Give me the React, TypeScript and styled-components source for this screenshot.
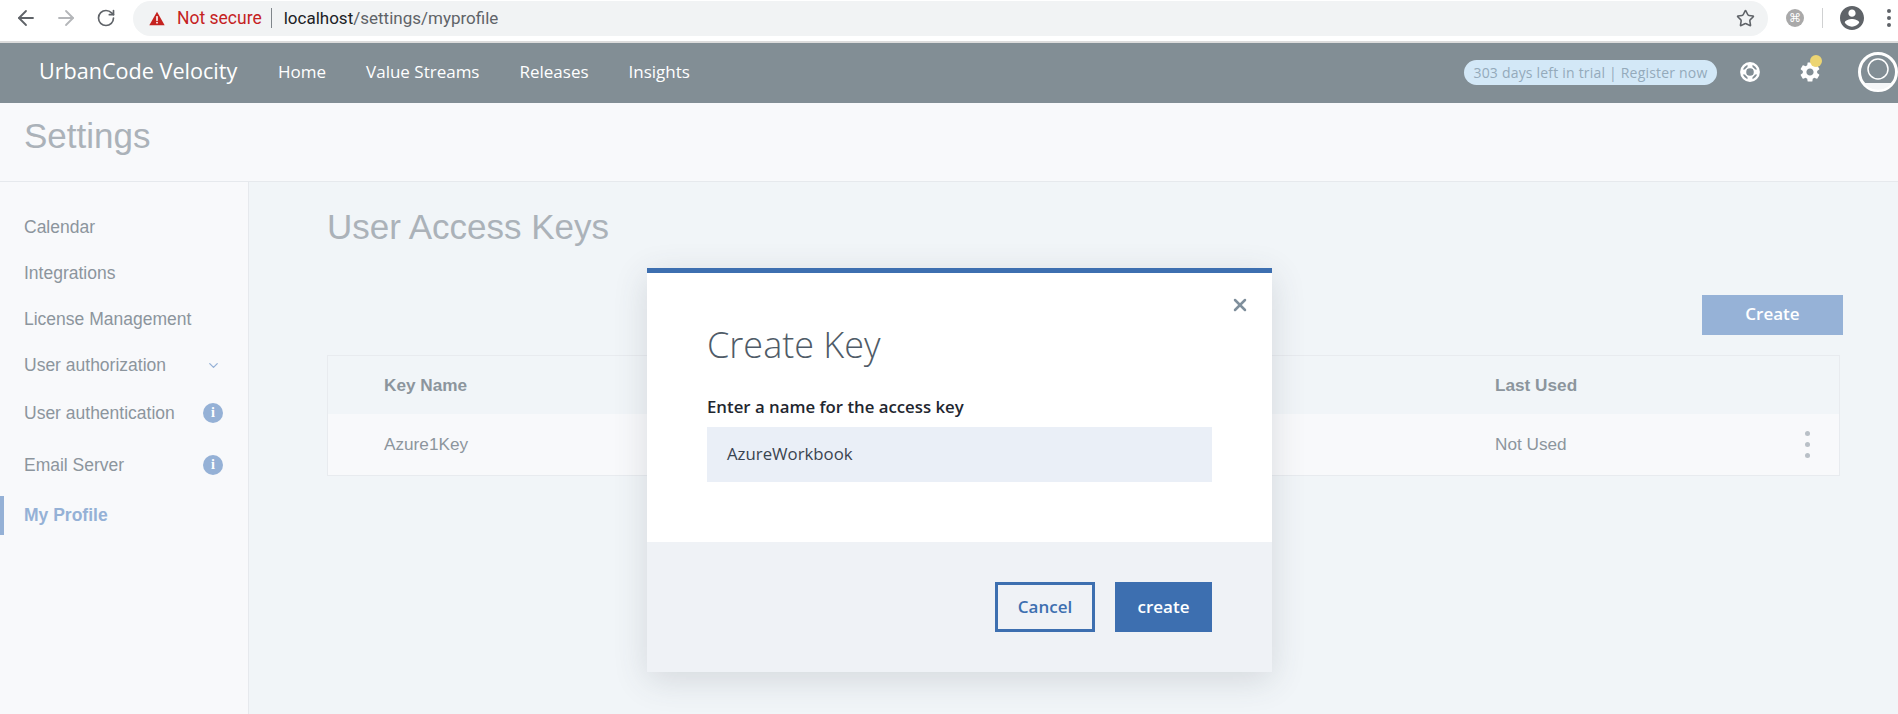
import React from 'react';
import styled, { createGlobalStyle } from 'styled-components';
import { ArrowLeft, ArrowRight, RotateCw, Star, ChevronDown, X } from 'lucide-react';

const GlobalStyle = createGlobalStyle`
  html, body {
    margin: 0;
    height: 100%;
    overflow: hidden;
    background: #f1f5f8;
    font-family: "Liberation Sans", Arial, sans-serif;
  }
  * {
    box-sizing: border-box;
  }
`;

const Page = styled.div`
  position: relative;
  display: flex;
  flex-direction: column;
  width: 1898px;
  height: 714px;
  overflow: hidden;
`;

/* browser chrome */
const BrowserBar = styled.div`
  display: flex;
  align-items: center;
  flex: none;
  height: 43px;
  padding: 1px 0 6px 14px;
  background: #fff;
  border-bottom: 2px solid #dcdcdc;
`;

const ChromeButton = styled.span<{ $faded?: boolean }>`
  display: flex;
  justify-content: center;
  width: 24px;
  margin-right: 16px;
  color: ${(p) => (p.$faded ? '#b4b6b9' : '#5f6368')};
`;

const UrlPill = styled.div`
  display: flex;
  align-items: center;
  width: 1635px;
  height: 35px;
  margin-left: -1px;
  padding: 0 13px 0 16px;
  border-radius: 18px;
  background: #f1f3f4;
  font-family: Roboto, sans-serif;
  font-size: 17px;
`;

const NotSecure = styled.span`
  margin-left: 12px;
  color: #c5221f;
  font-size: 17.500px;
`;

const UrlDivider = styled.span`
  width: 1px;
  height: 20px;
  margin: 0 12px 0 9px;
  background: #80868b;
`;

const UrlHost = styled.span`
  color: #202124;
`;

const UrlPath = styled.span`
  flex: 1;
  color: #5f6368;
`;

const ChromeTools = styled.div`
  display: flex;
  align-items: center;
  margin-left: 18px;
`;

const ExtensionBadge = styled.span`
  display: flex;
  align-items: center;
  justify-content: center;
  width: 18px;
  height: 18px;
  border-radius: 50%;
  background: #a9a9a9;
  color: #fff;
  font-family: "DejaVu Sans", sans-serif;
  font-size: 12px;
`;

const ToolDivider = styled.span`
  width: 1px;
  height: 20px;
  margin: 0 17px 0 18px;
  background: #d0d1d2;
`;

const ChromeDots = styled.span`
  display: flex;
  flex-direction: column;
  gap: 3px;
  margin-left: 23px;

  i {
    width: 4px;
    height: 4px;
    border-radius: 50%;
    background: #5f6368;
  }
`;

/* app header */
const NavBar = styled.header`
  display: flex;
  align-items: center;
  flex: none;
  height: 60px;
  padding: 0 0 2px 39px;
  background: #828e95;
  color: #fff;
  font-family: "Open Sans", sans-serif;
`;

const Brand = styled.div`
  width: 239px;
  padding-bottom: 3px;
  font-size: 21.600px;
`;

const NavLink = styled.a`
  margin-right: 40px;
  padding-bottom: 2px;
  font-size: 17px;
`;

const NavRight = styled.div`
  display: flex;
  align-items: center;
  margin-left: auto;
`;

const TrialPill = styled.div`
  display: flex;
  align-items: center;
  justify-content: center;
  width: 253px;
  height: 25px;
  margin-right: 21px;
  border-radius: 13px;
  background: #d3e8f7;
  color: #94aabb;
  font-family: "Open Sans", sans-serif;
  font-size: 14px;
  letter-spacing: 0.2px;
`;

const NavIcon = styled.span`
  position: relative;
  display: flex;
  justify-content: center;
  width: 24px;
  margin-right: 36px;
`;

const Badge = styled.span`
  position: absolute;
  top: -5px;
  left: 12px;
  width: 12px;
  height: 12px;
  border-radius: 50%;
  background: #ecd573;
`;

const Avatar = styled.span`
  display: flex;
  flex: none;
  width: 40px;
  height: 40px;
`;

/* settings */
const PageHeader = styled.div`
  display: flex;
  align-items: center;
  flex: none;
  height: 79px;
  padding: 0 0 12px 24px;
  background: #f8f9fb;
  border-bottom: 1px solid #e6e9ed;
  color: #abb2b9;
  font-size: 35px;
`;

const Body = styled.div`
  display: flex;
  flex: 1;
`;

const Sidebar = styled.nav`
  flex: none;
  width: 249px;
  padding-top: 22px;
  background: #f8f9fb;
  border-right: 1px solid #e6e9ed;
`;

const SideItem = styled.div<{ $height?: number; $active?: boolean }>`
  display: flex;
  align-items: center;
  justify-content: space-between;
  height: ${(p) => p.$height ?? 46}px;
  margin-top: ${(p) => (p.$active ? 4 : 0)}px;
  padding: 0 25px 0 ${(p) => (p.$active ? 20 : 24)}px;
  border-left: ${(p) => (p.$active ? '4px solid #95b1d6' : 'none')};
  color: ${(p) => (p.$active ? '#95b1d6' : '#8c959d')};
  font-size: 17.500px;
  font-weight: ${(p) => (p.$active ? 700 : 400)};
`;

const ChevronSlot = styled.span`
  display: flex;
  justify-content: center;
  width: 20px;
  color: #95b1d6;
`;

const InfoDot = styled.span`
  display: flex;
  align-items: center;
  justify-content: center;
  width: 20px;
  height: 20px;
  border-radius: 50%;
  background: #95b1d6;
  color: #fff;
  font-family: "Liberation Serif", serif;
  font-size: 14px;
  font-weight: 700;
`;

const Main = styled.main`
  flex: 1;
  padding: 25px 58px 0 78px;
`;

const MainTitle = styled.h2`
  margin: 0;
  color: #abb2b9;
  font-size: 35px;
  font-weight: 400;
  line-height: 40px;
`;

const Actions = styled.div`
  display: flex;
  justify-content: flex-end;
  margin: 48px -3px 20px 0;
`;

const PrimaryFaded = styled.button`
  width: 141px;
  height: 40px;
  padding-bottom: 4px;
  border: 0;
  background: #96b2d7;
  color: #fff;
  font-family: "Open Sans", sans-serif;
  font-size: 17px;
  font-weight: 600;
`;

const Table = styled.div`
  border: 1px solid #e8ebef;
  color: #8c959d;
  font-size: 17.200px;
`;

const Row = styled.div<{ $header?: boolean }>`
  display: grid;
  grid-template-columns: 1111px 1fr 34px;
  align-items: center;
  height: ${(p) => (p.$header ? 58 : 61)}px;
  padding: 0 0 0 56px;
  background: ${(p) => (p.$header ? 'transparent' : '#f8f9fb')};
  font-weight: ${(p) => (p.$header ? 700 : 400)};
`;

const MoreDots = styled.span`
  display: flex;
  flex-direction: column;
  gap: 6px;

  i {
    width: 5px;
    height: 5px;
    border-radius: 50%;
    background: #b9c0c7;
  }
`;

/* create key dialog */
const Modal = styled.section`
  position: absolute;
  top: 268px;
  left: 647px;
  display: flex;
  flex-direction: column;
  width: 625px;
  height: 404px;
  border-top: 5px solid #3d6fb0;
  background: #fff;
  box-shadow: 0 8px 32px rgba(60, 70, 80, 0.16);
`;

const CloseButton = styled.span`
  position: absolute;
  top: 22px;
  right: 22px;
  display: flex;
  color: #7f8f9c;
`;

const ModalBody = styled.div`
  flex: 1;
  padding: 50px 60px 0;
`;

const ModalTitle = styled.h3`
  margin: 0 0 29px;
  color: #4f5b67;
  font-family: "Open Sans", sans-serif;
  font-size: 36px;
  font-weight: 300;
  line-height: 44px;
`;

const FieldLabel = styled.label`
  display: block;
  margin-bottom: 9px;
  color: #1f2730;
  font-family: "Open Sans", sans-serif;
  font-size: 16.800px;
  font-weight: 600;
  line-height: 22px;
`;

const NameInput = styled.div`
  display: flex;
  align-items: center;
  height: 55px;
  padding: 0 20px 2px;
  background: #eaeff7;
  color: #3a4450;
  font-family: "Open Sans", sans-serif;
  font-size: 16.800px;
`;

const ModalFooter = styled.div`
  display: flex;
  justify-content: flex-end;
  gap: 20px;
  flex: none;
  height: 130px;
  padding: 40px 60px 0;
  background: #eff2f6;
`;

const Button = styled.button<{ $outline?: boolean }>`
  width: ${(p) => (p.$outline ? 100 : 97)}px;
  height: 50px;
  padding-bottom: 2px;
  border: ${(p) => (p.$outline ? '3px solid #3d6fb0' : '0')};
  background: ${(p) => (p.$outline ? 'transparent' : '#3d6fb0')};
  color: ${(p) => (p.$outline ? '#3d6fb0' : '#fff')};
  font-family: "Open Sans", sans-serif;
  font-size: 17px;
  font-weight: 600;
`;

function WarningIcon (): React.ReactElement {
  return (
    <svg width='16' height='15' viewBox='0 0 20 18'>
      <path d='M10 0.5L19.600 17.500H0.400z' fill='#c5221f' />
      <rect x='9' y='6' width='2' height='6' fill='#fff' />
      <rect x='9' y='13.200' width='2' height='2' fill='#fff' />
    </svg>
  );
}

function ProfileIcon (): React.ReactElement {
  return (
    <svg width='24' height='24' viewBox='2 2 20 20'>
      <path fill='#5f6368' d='M12 2C6.480 2 2 6.480 2 12s4.480 10 10 10 10-4.480 10-10S17.520 2 12 2zm0 3c1.660 0 3 1.340 3 3s-1.340 3-3 3-3-1.340-3-3 1.340-3 3-3zm0 14.200c-2.500 0-4.710-1.280-6-3.220.030-1.990 4-3.080 6-3.080 1.990 0 5.970 1.090 6 3.080-1.290 1.940-3.500 3.220-6 3.220z' />
    </svg>
  );
}

function LifeRingIcon (): React.ReactElement {
  return (
    <svg width='20' height='20' viewBox='0 0 20 20'>
      <circle cx='10' cy='10' r='8.700' fill='none' stroke='#fff' strokeWidth='2.400' />
      <circle cx='10' cy='10' r='4.700' fill='none' stroke='#fff' strokeWidth='1.800' />
      <path d='M10 2v5M10 13v5M2 10h5M13 10h5' stroke='#fff' strokeWidth='5' />
      <circle cx='10' cy='10' r='3.800' fill='#828e95' />
    </svg>
  );
}

function GearIcon (): React.ReactElement {
  return (
    <svg width='24' height='24' viewBox='0 0 24 24'>
      <path fill='#fff' d='M19.140 12.940c.040-.300.060-.610.060-.940 0-.320-.020-.640-.070-.940l2.030-1.580c.180-.140.230-.410.120-.610l-1.920-3.320c-.120-.220-.370-.290-.590-.220l-2.390.960c-.500-.380-1.030-.700-1.620-.940l-.360-2.540c-.040-.240-.240-.410-.480-.410h-3.840c-.240 0-.430.170-.470.410l-.360 2.540c-.590.240-1.130.570-1.620.940l-2.390-.960c-.220-.080-.470 0-.590.220L2.740 8.870c-.120.210-.080.470.120.610l2.030 1.580c-.050.300-.090.630-.090.940s.020.640.070.940l-2.030 1.580c-.180.140-.230.410-.12.610l1.920 3.320c.120.220.370.290.590.220l2.390-.960c.500.380 1.030.700 1.620.940l.360 2.540c.050.240.240.410.480.410h3.840c.240 0 .440-.17.470-.41l.360-2.540c.590-.240 1.130-.560 1.620-.94l2.390.96c.220.080.470 0 .590-.22l1.920-3.320c.120-.22.070-.47-.12-.61l-2.010-1.580zM12 15.600c-1.980 0-3.600-1.620-3.600-3.600s1.620-3.600 3.600-3.600 3.600 1.620 3.600 3.600-1.620 3.600-3.600 3.600z' />
    </svg>
  );
}

function AvatarIcon (): React.ReactElement {
  return (
    <svg width='40' height='40' viewBox='0 0 40 40'>
      <circle cx='20' cy='20' r='18.500' fill='none' stroke='#fff' strokeWidth='3' />
      <circle cx='20' cy='17' r='10' fill='none' stroke='#fff' strokeWidth='1.500' />
      <path d='M6 31h28a18 18 0 0 1-28 0z' fill='#f4f6f8' />
    </svg>
  );
}

const sideItems = ['Calendar', 'Integrations', 'License Management'];

export default function App (): React.ReactElement {
  return (
    <Page>
      <GlobalStyle />
      <BrowserBar>
        <ChromeButton><ArrowLeft size={24} strokeWidth={1.800} /></ChromeButton>
        <ChromeButton $faded><ArrowRight size={24} strokeWidth={1.800} /></ChromeButton>
        <ChromeButton><RotateCw size={20} strokeWidth={2} /></ChromeButton>
        <UrlPill>
          <WarningIcon />
          <NotSecure>Not secure</NotSecure>
          <UrlDivider />
          <UrlHost>localhost</UrlHost>
          <UrlPath>/settings/myprofile</UrlPath>
          <Star size={19} strokeWidth={2} color='#5f6368' />
        </UrlPill>
        <ChromeTools>
          <ExtensionBadge>⌘</ExtensionBadge>
          <ToolDivider />
          <ProfileIcon />
          <ChromeDots><i /><i /><i /></ChromeDots>
        </ChromeTools>
      </BrowserBar>
      <NavBar>
        <Brand>UrbanCode Velocity</Brand>
        <NavLink>Home</NavLink>
        <NavLink>Value Streams</NavLink>
        <NavLink>Releases</NavLink>
        <NavLink>Insights</NavLink>
        <NavRight>
          <TrialPill>303 days left in trial | Register now</TrialPill>
          <NavIcon><LifeRingIcon /></NavIcon>
          <NavIcon><GearIcon /><Badge /></NavIcon>
          <Avatar><AvatarIcon /></Avatar>
        </NavRight>
      </NavBar>
      <PageHeader>Settings</PageHeader>
      <Body>
        <Sidebar>
          {sideItems.map((item) => <SideItem key={item}>{item}</SideItem>)}
          <SideItem>User authorization <ChevronSlot><ChevronDown size={15} /></ChevronSlot></SideItem>
          <SideItem $height={50}>User authentication <InfoDot>i</InfoDot></SideItem>
          <SideItem $height={54}>Email Server <InfoDot>i</InfoDot></SideItem>
          <SideItem $height={39} $active>My Profile</SideItem>
        </Sidebar>
        <Main>
          <MainTitle>User Access Keys</MainTitle>
          <Actions><PrimaryFaded>Create</PrimaryFaded></Actions>
          <Table>
            <Row $header><span>Key Name</span><span>Last Used</span></Row>
            <Row>
              <span>Azure1Key</span>
              <span>Not Used</span>
              <MoreDots><i /><i /><i /></MoreDots>
            </Row>
          </Table>
        </Main>
      </Body>
      <Modal>
        <CloseButton><X size={20} strokeWidth={3} /></CloseButton>
        <ModalBody>
          <ModalTitle>Create Key</ModalTitle>
          <FieldLabel>Enter a name for the access key</FieldLabel>
          <NameInput>AzureWorkbook</NameInput>
        </ModalBody>
        <ModalFooter>
          <Button $outline>Cancel</Button>
          <Button>create</Button>
        </ModalFooter>
      </Modal>
    </Page>
  );
}
